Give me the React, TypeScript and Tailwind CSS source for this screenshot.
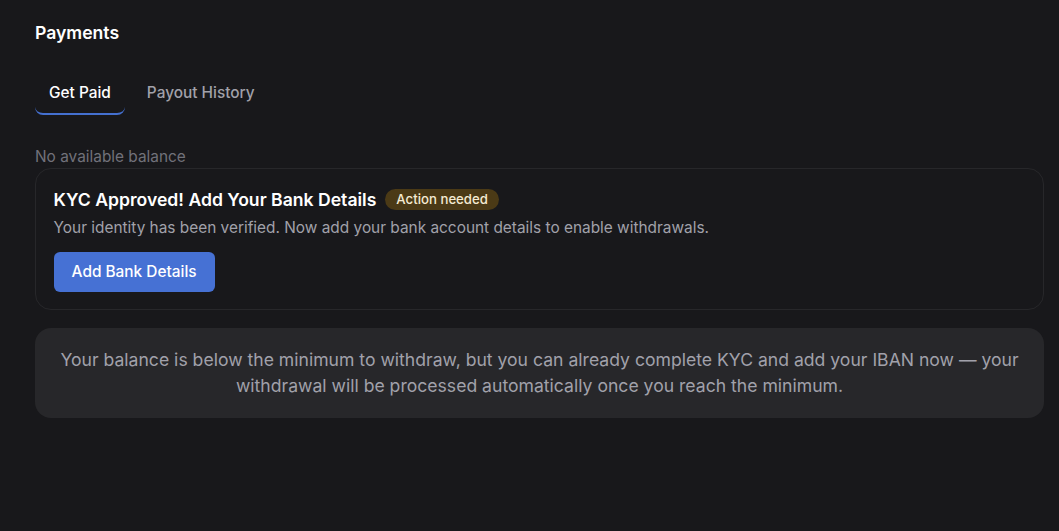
import { useState } from 'react';

const tabs = ['Get Paid', 'Payout History'];

export default function App() {
  const [tab, setTab] = useState('Get Paid');

  return (
    <div className="min-h-screen bg-[#18181b] pl-[35px] pr-[15px] pt-[20px] font-['Inter','Noto_Sans',sans-serif] text-white">
      <h1 className="text-[17.6px] leading-[26px] font-semibold">Payments</h1>

      <div className="mt-[27px] flex gap-2">
        {tabs.map((t) => (
          <button
            key={t}
            onClick={() => setTab(t)}
            className={
              t === tab
                ? 'rounded-lg border-b-2 border-[#4470d0] px-[14px] pt-[9px] pb-[9px] text-[15.4px] leading-[22px] font-medium text-white'
                : 'rounded-lg border-b-2 border-transparent px-[14px] pt-[9px] pb-[9px] text-[15.4px] leading-[22px] font-medium text-[#a1a1aa]'
            }
          >
            {t}
          </button>
        ))}
      </div>

      <div className="mt-[31px] text-[15.4px] leading-[22px] text-[#71717a]">No available balance</div>

      <div className="rounded-2xl border border-[#27272a] p-[17.6px]">
        <div className="flex items-center gap-[9px]">
          <h2 className="text-[17.6px] leading-[26px] font-semibold">KYC Approved! Add Your Bank Details</h2>
          <span className="rounded-full bg-[#4b3a16] px-[11px] py-[2px] text-[13.2px] leading-[17px] font-medium text-[#f4ead2]">
            Action needed
          </span>
        </div>
        <p className="mt-[4px] text-[15.4px] leading-[22px] text-[#a1a1aa]">
          Your identity has been verified. Now add your bank account details to enable withdrawals.
        </p>
        <button className="mt-[13px] h-10 rounded-md bg-[#4671d4] px-[18px] text-[15.4px] font-medium text-white hover:bg-[#3f66c2]">
          Add Bank Details
        </button>
      </div>

      <div className="mt-[18px] rounded-2xl bg-[#27272a] px-6 pt-[19px] pb-[19px] text-center text-[17.6px] leading-[26px] text-[#a1a1aa]">
        Your balance is below the minimum to withdraw, but you can already complete KYC and add your IBAN now — your withdrawal
        will be processed automatically once you reach the minimum.
      </div>
    </div>
  );
}
